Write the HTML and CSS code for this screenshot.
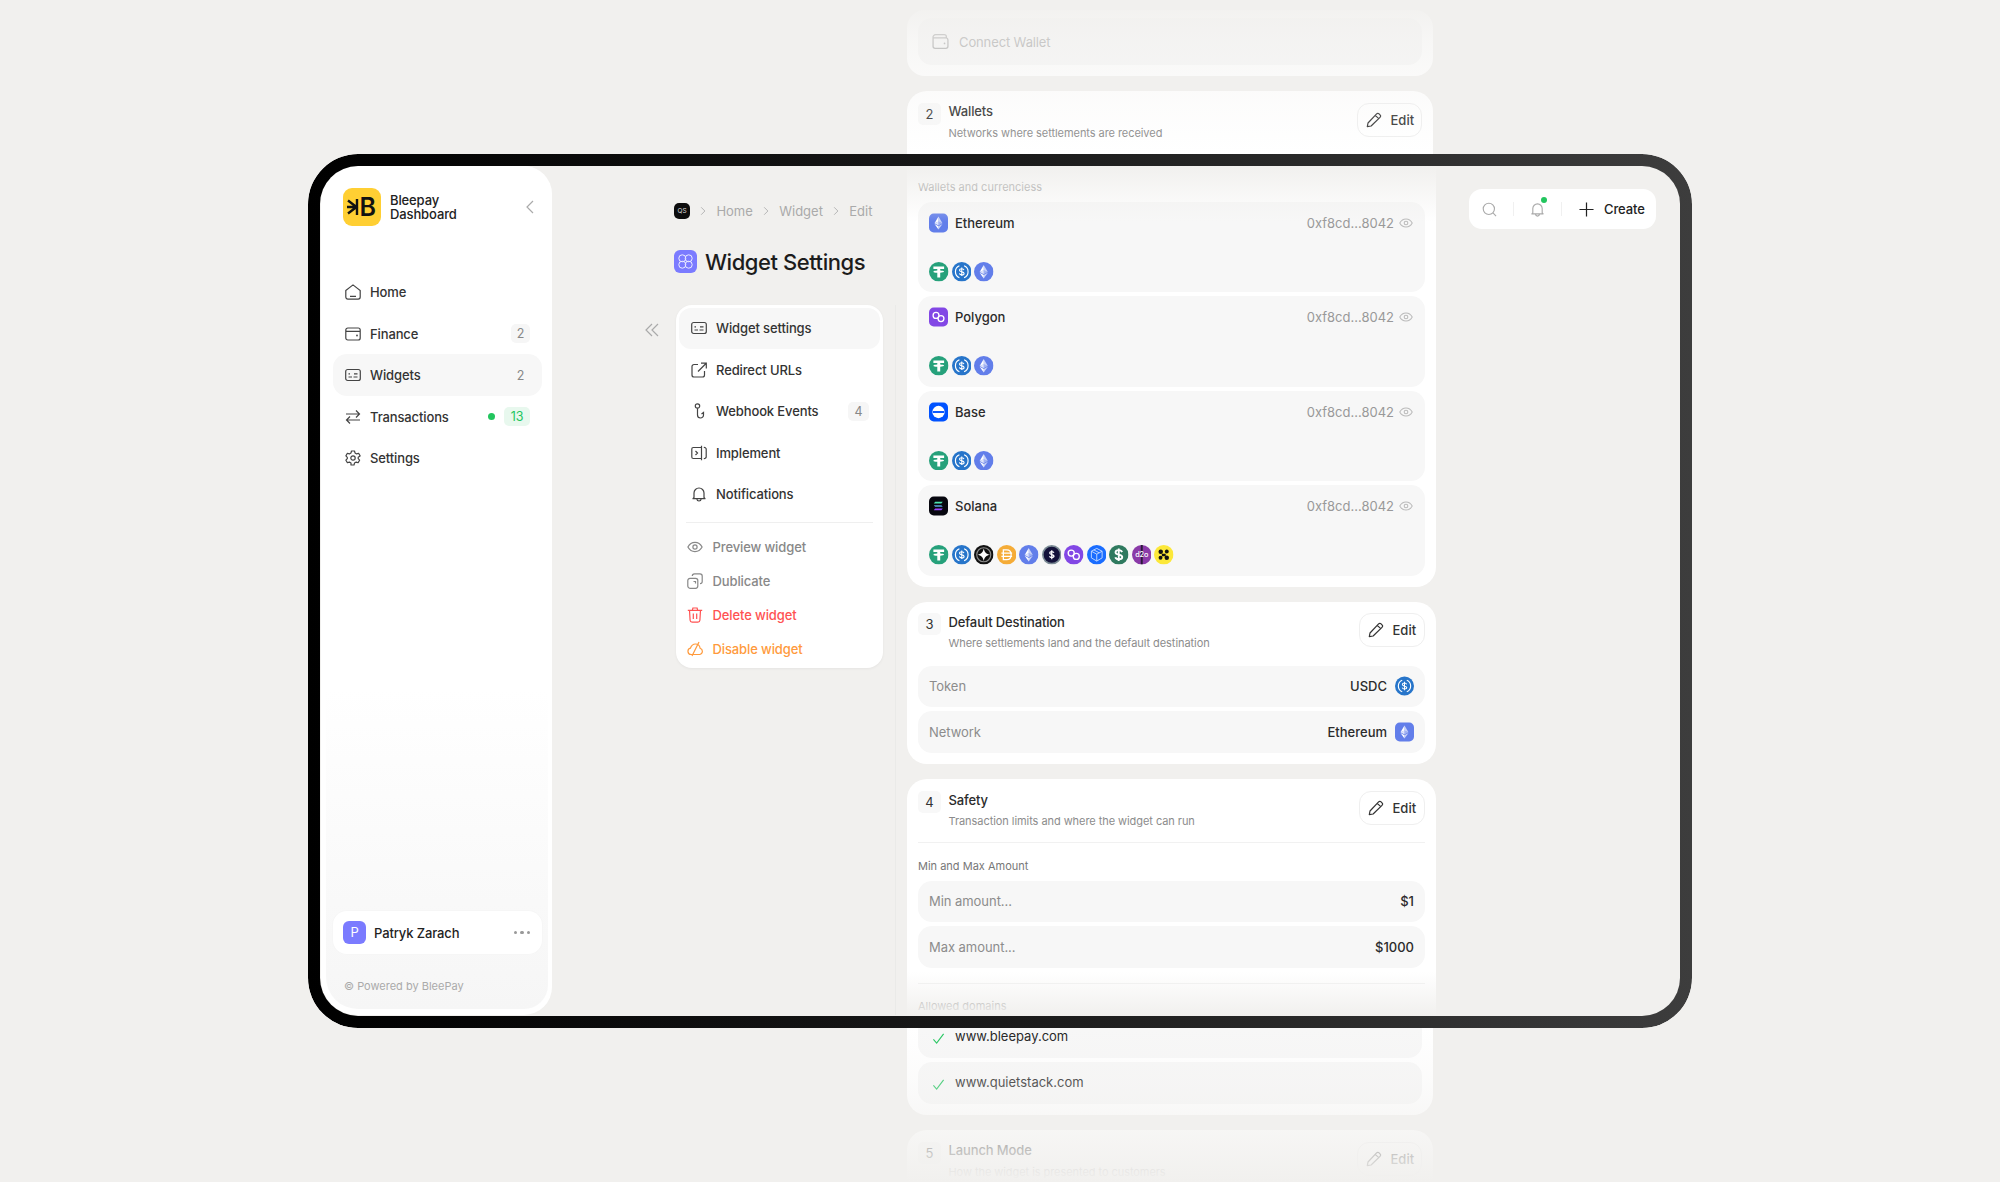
FILE: index.html
```html
<!DOCTYPE html>
<html lang="en">
<head>
    <meta charset="UTF-8">
    <title>Bleepay Dashboard - Widget Settings</title>
    <link rel="stylesheet" href="styles.css">
</head>
<body>

<svg class="sprites" xmlns="http://www.w3.org/2000/svg">
    <symbol id="ic-eth" viewBox="0 0 20 20"><path d="M10 3.200v5.200l4.200 1.900z" fill="#fff" opacity=".65"/><path d="M10 3.200 5.800 10.300 10 8.400z" fill="#fff"/><path d="M10 8.400v4.200l4.200-2.300z" fill="#fff" opacity=".4"/><path d="M10 8.400 5.800 10.300l4.200 2.300z" fill="#fff" opacity=".8"/><path d="M10 13.400v3.400l4.200-5.800z" fill="#fff" opacity=".65"/><path d="M10 13.400 5.800 11l4.200 5.800z" fill="#fff"/></symbol>
    <symbol id="ic-loops" viewBox="0 0 20 20"><circle cx="7.400" cy="8.300" r="3.100" fill="none" stroke="#fff" stroke-width="1.400"/><circle cx="12.600" cy="11.700" r="3.100" fill="none" stroke="#fff" stroke-width="1.400"/></symbol>
    <symbol id="tk-usdt" viewBox="0 0 20 20"><circle cx="10" cy="10" r="10" fill="#26a17b"/><path d="M4.500 4.500h11v2.600h-4v1.500c2.100.1 4 .5 4 1.200s-1.900 1.100-4 1.200V16h-3v-4.900c-2.100-.1-4-.5-4-1.200s1.900-1.100 4-1.200V7.100h-4z" fill="#fff"/></symbol>
    <symbol id="tk-usdc" viewBox="0 0 20 20"><circle cx="10" cy="10" r="10" fill="#2775ca"/><path d="M7.600 3.900a6.600 6.600 0 0 0 0 12.200M12.400 3.900a6.600 6.600 0 0 1 0 12.200" fill="none" stroke="#fff" stroke-width="1.200"/><path d="M12.300 8.300c-.3-1-1.200-1.400-2.300-1.400-1.300 0-2.300.6-2.300 1.600 0 2.300 4.700 1 4.700 3.200 0 1-1 1.500-2.400 1.500-1.200 0-2.100-.5-2.400-1.500M10 5.600v8.800" fill="none" stroke="#fff" stroke-width="1.100"/></symbol>
    <symbol id="tk-eth" viewBox="0 0 20 20"><circle cx="10" cy="10" r="10" fill="#627eea"/><use href="#ic-eth"/></symbol>
    <symbol id="tk-diamond" viewBox="0 0 20 20"><circle cx="10" cy="10" r="10" fill="#111"/><circle cx="10" cy="10" r="7.200" fill="none" stroke="#888" stroke-width="1.200"/><path d="M10 3.500c.8 4 2.500 5.700 6.500 6.500-4 .8-5.700 2.500-6.500 6.500-.8-4-2.500-5.700-6.500-6.500 4-.8 5.700-2.500 6.500-6.500z" fill="#fff"/></symbol>
    <symbol id="tk-dai" viewBox="0 0 20 20"><circle cx="10" cy="10" r="10" fill="#f5ac37"/><path d="M6.500 5H10c3 0 4.500 2.200 4.500 5s-1.500 5-4.500 5H6.500zM4.500 8.400h11M4.500 11.600h11" fill="none" stroke="#fff" stroke-width="1.300"/></symbol>
    <symbol id="tk-usdx" viewBox="0 0 20 20"><circle cx="10" cy="10" r="10" fill="#7a8a94"/><circle cx="10" cy="10" r="8.300" fill="#14123a"/><path d="M12.200 8c-.3-.8-1.100-1.200-2.200-1.200-1.200 0-2.100.6-2.100 1.500 0 2.100 4.400.9 4.400 3.100 0 1-1 1.500-2.300 1.500-1.200 0-2-.5-2.300-1.300M10 5.500v9" fill="none" stroke="#fff" stroke-width="1.300"/></symbol>
    <symbol id="tk-matic" viewBox="0 0 20 20"><circle cx="10" cy="10" r="10" fill="#8247e5"/><use href="#ic-loops"/></symbol>
    <symbol id="tk-cube" viewBox="0 0 20 20"><circle cx="10" cy="10" r="10" fill="#1a6dff"/><path d="M10 3.500 15.500 6.400v6.800L10 16.500l-5.500-3.300V6.400zM4.500 6.400 10 9.400l5.500-3M10 9.400v7M7 5l5.500 3" fill="none" stroke="#cfe0ff" stroke-width=".9"/></symbol>
    <symbol id="tk-green" viewBox="0 0 20 20"><circle cx="10" cy="10" r="10" fill="#2f7a5f"/><path d="M13.400 7.300C13 6 11.800 5.300 10 5.300c-1.900 0-3.300.9-3.300 2.300 0 3.100 6.900 1.400 6.900 4.700 0 1.500-1.500 2.400-3.500 2.400-1.900 0-3.200-.8-3.600-2.200M10 3.500v13" fill="none" stroke="#fff" stroke-width="1.900"/></symbol>
    <symbol id="tk-d2o" viewBox="0 0 20 20"><circle cx="10" cy="10" r="10" fill="#8a3aa8"/><path d="M9 .1h2v19.800H9z" fill="#2b1a3a"/><text x="10" y="12.800" text-anchor="middle" font-family="Inter, sans-serif" font-size="7.500" font-weight="500" fill="#fff">d2o</text></symbol>
    <symbol id="tk-yellow" viewBox="0 0 20 20"><circle cx="10" cy="10" r="10" fill="#fce83a"/><circle cx="6.900" cy="7" r="2.300" fill="#111"/><circle cx="13.100" cy="6.700" r="2" fill="#111"/><circle cx="6.700" cy="13" r="2" fill="#111"/><circle cx="13.100" cy="13.100" r="2.300" fill="#111"/><path d="M8 9h4v2.500H8z" fill="#111"/></symbol>
    <symbol id="ic-widget" viewBox="0 0 16 16"><rect x=".7" y="2.500" width="14.600" height="11" rx="2" fill="none" stroke="currentColor" stroke-width="1.200"/><path d="M3.500 6.800h1.500M3.500 10h3.500M8.500 10h4M9 6.800h3.500" fill="none" stroke="currentColor" stroke-width="1.200"/></symbol>
    <symbol id="ic-eye" viewBox="0 0 16 16"><path d="M.9 8C2.500 5 5 3.400 8 3.400S13.500 5 15.100 8c-1.600 3-4.100 4.600-7.100 4.600S2.500 11 .9 8z" fill="none" stroke="currentColor" stroke-width="1.200"/><circle cx="8" cy="8" r="2.100" fill="none" stroke="currentColor" stroke-width="1.200"/></symbol>
    <symbol id="ic-pencil" viewBox="0 0 16 16"><path d="M1.300 14.700 2 11 10.600 1.900c.7-.7 1.800-.7 2.500 0l.9.900c.7.700.7 1.800 0 2.500L5.100 14zM9.300 3.300l3.400 3.400" fill="none" stroke="currentColor" stroke-width="1.200" stroke-linejoin="round"/></symbol>
    <symbol id="ic-check" viewBox="0 0 14 14"><path d="M1.500 8 5 12 12.500 2" fill="none" stroke="currentColor" stroke-width="1.200"/></symbol>
    <symbol id="ic-wallet" viewBox="0 0 16 16"><path d="M1 4.500V12.500a2 2 0 0 0 2 2h10a2 2 0 0 0 2-2V6.500a2 2 0 0 0-2-2H1zm0 0a2.500 2.500 0 0 1 2.500-3h8a2 2 0 0 1 2 2v1" fill="none" stroke="currentColor" stroke-width="1.200"/><circle cx="11.800" cy="9.800" r=".8" fill="currentColor"/></symbol>
    <symbol id="ic-bell" viewBox="0 0 16 16"><path d="M3 11.500V7a5 5 0 0 1 10 0v4.500l1 1.200H2zM5.800 13c.2 1.300 1.100 2 2.200 2s2-.7 2.200-2" fill="none" stroke="currentColor" stroke-width="1.200" stroke-linejoin="round"/></symbol>
    <symbol id="ic-chev" viewBox="0 0 8 12"><path d="M1.500 1 6.500 6l-5 5" fill="none" stroke="currentColor" stroke-width="1.100"/></symbol>
</svg>

<div class="page">

    <aside class="sidebar">
        <div class="side-panel">
            <div class="brand">
                <svg class="logo" viewBox="0 0 38 38">
                    <rect width="38" height="38" rx="9" fill="#ffcf33"/>
                    <path d="M4 19h9.500M5 12.500 13.500 19 5 25.500M14 11v16" fill="none" stroke="#111" stroke-width="2.400"/>
                    <text x="16.500" y="27.500" class="logo-b">B</text>
                </svg>
                <div class="brand-name">Bleepay<br>Dashboard</div>
                <svg class="brand-back" viewBox="0 0 8 14"><path d="M7 1 1 7l6 6" fill="none" stroke="#aaa" stroke-width="1.200"/></svg>
            </div>

            <nav class="side-nav">
                <a class="nav-row">
                    <svg class="nav-icon" viewBox="0 0 16 16"><path d="M.8 6.500 8 .9l7.200 5.600v6.600a2 2 0 0 1-2 2H2.800a2 2 0 0 1-2-2zM5 12.300h6" fill="none" stroke="currentColor" stroke-width="1.200"/></svg>
                    <span class="nav-label">Home</span>
                </a>
                <a class="nav-row">
                    <svg class="nav-icon" viewBox="0 0 16 16"><path d="M.8 4a2 2 0 0 1 2-2h10.400a2 2 0 0 1 2 2v8a2 2 0 0 1-2 2H2.800a2 2 0 0 1-2-2zM.8 4.200c0 .8.800 1.100 2 1.100h12.400" fill="none" stroke="currentColor" stroke-width="1.200"/><circle cx="12" cy="9.500" r=".9" fill="currentColor"/></svg>
                    <span class="nav-label">Finance</span>
                    <span class="badge">2</span>
                </a>
                <a class="nav-row active">
                    <svg class="nav-icon"><use href="#ic-widget"/></svg>
                    <span class="nav-label">Widgets</span>
                    <span class="badge plain">2</span>
                </a>
                <a class="nav-row">
                    <svg class="nav-icon" viewBox="0 0 16 16"><path d="M1 5h13.500M11 1.500 14.500 5 11 8.500M15 11H1.500M5 7.500 1.500 11 5 14.500" fill="none" stroke="currentColor" stroke-width="1.200"/></svg>
                    <span class="nav-label">Transactions</span>
                    <span class="dot"></span>
                    <span class="badge green">13</span>
                </a>
                <a class="nav-row">
                    <svg class="nav-icon" viewBox="0 0 16 16"><path d="M6.500 1h3l.5 1.900 1.700 1 1.900-.6 1.500 2.600L13.200 7.300v1.400l1.400 1.400-1.500 2.600-1.900-.6-1.700 1-.5 1.900h-3L6 13.100l-1.700-1-1.900.6L.9 10.100l1.400-1.400V7.300L.9 5.900l1.500-2.600 1.900.6 1.700-1z" fill="none" stroke="currentColor" stroke-width="1.200" stroke-linejoin="round"/><circle cx="8" cy="8" r="2.200" fill="none" stroke="currentColor" stroke-width="1.200"/></svg>
                    <span class="nav-label">Settings</span>
                </a>
            </nav>

            <div class="user-card">
                <span class="avatar">P</span>
                <span class="user-name">Patryk Zarach</span>
                <span class="more"><i></i><i></i><i></i></span>
            </div>
            <div class="powered">© Powered by BleePay</div>
        </div>
    </aside>

    <section class="settings-col">
        <div class="crumbs">
            <span class="crumb-logo">QS</span>
            <svg class="crumb-chev"><use href="#ic-chev"/></svg>
            <span>Home</span>
            <svg class="crumb-chev"><use href="#ic-chev"/></svg>
            <span>Widget</span>
            <svg class="crumb-chev"><use href="#ic-chev"/></svg>
            <span>Edit</span>
        </div>
        <div class="page-title">
            <svg class="title-icon" viewBox="0 0 23 23">
                <rect width="23" height="23" rx="6" fill="#7b7bff"/>
                <g fill="none" stroke="#fff" stroke-width="1" opacity=".85"><circle cx="8.300" cy="8.300" r="3.500"/><circle cx="14.700" cy="8.300" r="3.500"/><circle cx="8.300" cy="14.700" r="3.500"/><circle cx="14.700" cy="14.700" r="3.500"/></g>
            </svg>
            <h1>Widget Settings</h1>
        </div>
        <div class="settings-row">
            <svg class="collapse" viewBox="0 0 14 14"><path d="M7 1 1 7l6 6M13 1 7 7l6 6" fill="none" stroke="#aaa" stroke-width="1.200"/></svg>
            <div class="menu-card">
                <a class="menu-row active">
                    <svg class="nav-icon"><use href="#ic-widget"/></svg>
                    <span class="nav-label">Widget settings</span>
                </a>
                <a class="menu-row">
                    <svg class="nav-icon" viewBox="0 0 16 16"><path d="M7 2.500H3a2 2 0 0 0-2 2v8.500a2 2 0 0 0 2 2h8.500a2 2 0 0 0 2-2V9M7 9.500 15 1.500M10 1.200h5.300v5.300" fill="none" stroke="currentColor" stroke-width="1.200"/></svg>
                    <span class="nav-label">Redirect URLs</span>
                </a>
                <a class="menu-row">
                    <svg class="nav-icon" viewBox="0 0 16 16"><circle cx="6.500" cy="3" r="2.200" fill="none" stroke="currentColor" stroke-width="1.200"/><path d="M6.500 5.200V12a3 3 0 0 0 6 0V9.500l-2 1.500" fill="none" stroke="currentColor" stroke-width="1.200"/></svg>
                    <span class="nav-label">Webhook Events</span>
                    <span class="badge wide">4</span>
                </a>
                <a class="menu-row">
                    <svg class="nav-icon" viewBox="0 0 16 16"><path d="M10.500 2.500H2.300a1.500 1.500 0 0 0-1.500 1.500v8a1.500 1.500 0 0 0 1.500 1.500h8.200M10.500 .8v14.400M12.800 2.500a2 2 0 0 1 2.400 1.500v8a2 2 0 0 1-2.400 1.500M4.500 6l2 2-2 2" fill="none" stroke="currentColor" stroke-width="1.200"/></svg>
                    <span class="nav-label">Implement</span>
                </a>
                <a class="menu-row">
                    <svg class="nav-icon"><use href="#ic-bell"/></svg>
                    <span class="nav-label">Notifications</span>
                </a>
                <div class="menu-line"></div>
                <a class="action-row grey">
                    <svg class="nav-icon"><use href="#ic-eye"/></svg>
                    <span>Preview widget</span>
                </a>
                <a class="action-row grey">
                    <svg class="nav-icon" viewBox="0 0 16 16"><rect x=".8" y="5.300" width="10" height="10" rx="2.200" fill="none" stroke="currentColor" stroke-width="1.200"/><path d="M5.300 3A2.200 2.200 0 0 1 7.500.8h5.500a2.200 2.200 0 0 1 2.200 2.200v5.500a2.200 2.200 0 0 1-2.200 2.200M6.500 8.500h2v2" fill="none" stroke="currentColor" stroke-width="1.200"/></svg>
                    <span>Dublicate</span>
                </a>
                <a class="action-row red">
                    <svg class="nav-icon" viewBox="0 0 16 16"><path d="M.8 3.300h14.400M5.300 3.300l.6-2.300h4.200l.6 2.300M2.500 3.300l.6 10a2 2 0 0 0 2 1.900h5.800a2 2 0 0 0 2-1.900l.6-10M6.300 6.500v5.500M9.700 6.500v5.500" fill="none" stroke="currentColor" stroke-width="1.200"/></svg>
                    <span>Delete widget</span>
                </a>
                <a class="action-row orange">
                    <svg class="nav-icon" viewBox="0 0 16 16"><path d="M4 13.500a3.200 3.200 0 0 1-.6-6.300C4.300 4.500 6.200 3 8.500 3c2.600 0 4.300 1.900 4.600 4.300a3.200 3.200 0 0 1-.3 6.200zM12 1 5 15" fill="none" stroke="currentColor" stroke-width="1.200"/></svg>
                    <span>Disable widget</span>
                </a>
            </div>
        </div>
    </section>

    <div class="col-line"></div>

    <main class="cards">
        <div class="card first">
            <div class="connect">
                <svg class="connect-icon"><use href="#ic-wallet"/></svg>
                <span>Connect Wallet</span>
            </div>
        </div>

        <div class="card-top">
            <div class="card-head">
                <span class="step">2</span>
                <div class="head-text">
                    <div class="head-title">Wallets</div>
                    <div class="head-sub">Networks where settlements are received</div>
                </div>
                <button class="edit"><svg><use href="#ic-pencil"/></svg>Edit</button>
            </div>
        </div>
        <div class="card-rest wallets">
            <div class="field-label">Wallets and currenciess</div>
            <div class="rows">
                <div class="wallet">
                    <div class="wallet-top">
                        <svg class="chain" viewBox="0 0 20 20"><rect width="20" height="20" rx="5" fill="#627eea"/><use href="#ic-eth"/></svg>
                        <span class="wallet-name">Ethereum</span>
                        <span class="addr">0xf8cd...8042</span>
                        <svg class="eye"><use href="#ic-eye"/></svg>
                    </div>
                    <div class="tokens">
                        <svg><use href="#tk-usdt"/></svg><svg><use href="#tk-usdc"/></svg><svg><use href="#tk-eth"/></svg>
                    </div>
                </div>
                <div class="wallet">
                    <div class="wallet-top">
                        <svg class="chain" viewBox="0 0 20 20"><rect width="20" height="20" rx="5" fill="#8247e5"/><use href="#ic-loops"/></svg>
                        <span class="wallet-name">Polygon</span>
                        <span class="addr">0xf8cd...8042</span>
                        <svg class="eye"><use href="#ic-eye"/></svg>
                    </div>
                    <div class="tokens">
                        <svg><use href="#tk-usdt"/></svg><svg><use href="#tk-usdc"/></svg><svg><use href="#tk-eth"/></svg>
                    </div>
                </div>
                <div class="wallet">
                    <div class="wallet-top">
                        <svg class="chain" viewBox="0 0 20 20"><rect width="20" height="20" rx="5" fill="#0052ff"/><circle cx="10" cy="10" r="6.500" fill="#fff"/><rect x="4" y="9" width="12" height="2" fill="#0052ff"/></svg>
                        <span class="wallet-name">Base</span>
                        <span class="addr">0xf8cd...8042</span>
                        <svg class="eye"><use href="#ic-eye"/></svg>
                    </div>
                    <div class="tokens">
                        <svg><use href="#tk-usdt"/></svg><svg><use href="#tk-usdc"/></svg><svg><use href="#tk-eth"/></svg>
                    </div>
                </div>
                <div class="wallet">
                    <div class="wallet-top">
                        <svg class="chain" viewBox="0 0 20 20"><rect width="20" height="20" rx="5" fill="#07070f"/><path d="M6.500 5.500h8l-1.500 1.800H5z" fill="#4be3b0"/><path d="M5 9.100h8l1.500 1.800h-8z" fill="#5aa6e0"/><path d="M6.500 12.700h8L13 14.500H5z" fill="#9945ff"/></svg>
                        <span class="wallet-name">Solana</span>
                        <span class="addr">0xf8cd...8042</span>
                        <svg class="eye"><use href="#ic-eye"/></svg>
                    </div>
                    <div class="tokens">
                        <svg><use href="#tk-usdt"/></svg><svg><use href="#tk-usdc"/></svg><svg><use href="#tk-diamond"/></svg><svg><use href="#tk-dai"/></svg><svg><use href="#tk-eth"/></svg><svg><use href="#tk-usdx"/></svg><svg><use href="#tk-matic"/></svg><svg><use href="#tk-cube"/></svg><svg><use href="#tk-green"/></svg><svg><use href="#tk-d2o"/></svg><svg><use href="#tk-yellow"/></svg>
                    </div>
                </div>
            </div>
        </div>

        <div class="card">
            <div class="card-head wide">
                <span class="step">3</span>
                <div class="head-text">
                    <div class="head-title">Default Destination</div>
                    <div class="head-sub">Where settlements land and the default destination</div>
                </div>
                <button class="edit"><svg><use href="#ic-pencil"/></svg>Edit</button>
            </div>
            <div class="rows dest">
                <div class="field">
                    <span class="field-name">Token</span>
                    <span class="field-value">USDC</span>
                    <svg class="field-icon"><use href="#tk-usdc"/></svg>
                </div>
                <div class="field">
                    <span class="field-name">Network</span>
                    <span class="field-value">Ethereum</span>
                    <svg class="field-icon" viewBox="0 0 20 20"><rect width="20" height="20" rx="5" fill="#627eea"/><use href="#ic-eth"/></svg>
                </div>
            </div>
        </div>

        <div class="card-inner safety">
            <div class="card-head wide ruled">
                <span class="step">4</span>
                <div class="head-text">
                    <div class="head-title">Safety</div>
                    <div class="head-sub">Transaction limits and where the widget can run</div>
                </div>
                <button class="edit"><svg><use href="#ic-pencil"/></svg>Edit</button>
            </div>
            <div class="field-label amount">Min and Max Amount</div>
            <div class="rows">
                <div class="field">
                    <span class="field-name">Min amount...</span>
                    <span class="field-value strong">$1</span>
                </div>
                <div class="field">
                    <span class="field-name">Max amount...</span>
                    <span class="field-value strong">$1000</span>
                </div>
            </div>
            <div class="inner-line"></div>
            <div class="field-label">Allowed domains</div>
        </div>
        <div class="card-bottom">
            <div class="rows">
                <div class="domain"><svg><use href="#ic-check"/></svg><span>www.bleepay.com</span></div>
                <div class="domain"><svg><use href="#ic-check"/></svg><span>www.quietstack.com</span></div>
            </div>
        </div>

        <div class="card-top last">
            <div class="card-head">
                <span class="step">5</span>
                <div class="head-text">
                    <div class="head-title">Launch Mode</div>
                    <div class="head-sub">How the widget is presented to customers</div>
                </div>
                <button class="edit"><svg><use href="#ic-pencil"/></svg>Edit</button>
            </div>
        </div>

        <div class="fade fade-top"></div>
        <div class="fade fade-in-top"></div>
        <div class="fade fade-in-bottom"></div>
        <div class="fade fade-bottom"></div>
    </main>

    <div class="toolbar">
        <svg class="tool-icon" viewBox="0 0 16 16"><circle cx="7.300" cy="7.300" r="6" fill="none" stroke="#aaa" stroke-width="1.200"/><path d="M11.700 11.700 15 15" fill="none" stroke="#aaa" stroke-width="1.200"/></svg>
        <span class="tool-line"></span>
        <span class="tool-bell">
            <svg class="tool-icon"><use href="#ic-bell"/></svg>
            <span class="bell-dot"></span>
        </span>
        <span class="tool-line"></span>
        <svg class="tool-plus" viewBox="0 0 16 16"><path d="M8 .5v15M.5 8h15" fill="none" stroke="#222" stroke-width="1.300"/></svg>
        <span class="tool-create">Create</span>
    </div>
</div>

<div class="frame"></div>

</body>
</html>
```

FILE: styles.css
```css
* {
    box-sizing: border-box;
}
html, body {
    margin: 0;
    padding: 0;
}
body {
    width: 2000px;
    height: 1182px;
    overflow: hidden;
    position: relative;
    background-color: #f1f0ee;
    font-family: Inter, "Liberation Sans", sans-serif;
    font-size: 13px;
    font-weight: 500;
    letter-spacing: -0.12px;
    color: #2b2b2b;
}
.sprites {
    display: none;
}
.page {
    display: flex;
    align-items: flex-start;
    width: 2000px;
    height: 1182px;
    padding-left: 321px;
}

/* device frame drawn over everything */
.frame {
    position: absolute;
    left: 308px;
    top: 154px;
    width: 1384px;
    height: 874px;
    border: 12.5px solid transparent;
    border-radius: 50px;
    background: linear-gradient(90deg, #000 0%, #1a1a1a 50%, #3d3d3d 100%) border-box;
    -webkit-mask: linear-gradient(#000 0 0) padding-box, linear-gradient(#000 0 0);
    -webkit-mask-composite: xor;
    mask-composite: exclude;
    pointer-events: none;
}

/* sidebar */
.sidebar {
    flex: none;
    width: 231px;
    height: 849px;
    margin-top: 166px;
    padding: 0 4px 6px 5px;
    background-color: #fff;
    border-radius: 36px 28px 28px 36px;
}
.side-panel {
    height: 100%;
    display: flex;
    flex-direction: column;
    padding: 22px 6px 0 7px;
    border-radius: 32px 24px 24px 32px;
    background: linear-gradient(180deg, #fff 0%, #fff 62%, #f6f6f6 100%);
}
.brand {
    display: flex;
    align-items: center;
    height: 38px;
    margin-left: 10px;
}
.logo {
    flex: none;
    width: 38px;
    height: 38px;
}
.logo-b {
    font-family: Inter, sans-serif;
    font-size: 25px;
    font-weight: 600;
    fill: #111;
}
.brand-name {
    margin-left: 9px;
    font-size: 13px;
    line-height: 14px;
    color: #222;
}
.brand-back {
    width: 8px;
    height: 14px;
    margin-left: auto;
    margin-right: 8px;
}
.side-nav {
    margin-top: 45.300px;
}
.nav-row {
    display: flex;
    align-items: center;
    height: 41.500px;
    padding: 0 12px;
    border-radius: 14px;
    color: #333;
}
.nav-row.active, .menu-row.active {
    background-color: #f7f7f7;
}
.nav-icon {
    flex: none;
    width: 16px;
    height: 16px;
    color: #444;
}
.nav-label {
    margin-left: 9px;
}
.badge {
    margin-left: auto;
    width: 19px;
    height: 19px;
    line-height: 19px;
    text-align: center;
    border-radius: 5px;
    background-color: #f6f6f6;
    color: #888;
    font-size: 12.500px;
    font-weight: 400;
}
.badge.plain {
    background: none;
}
.badge.green {
    width: 26px;
    margin-left: 9px;
    background-color: #e8f8ee;
    color: #22c55e;
}
.badge.wide {
    width: 21px;
}
.dot {
    margin-left: auto;
    width: 7.500px;
    height: 7.500px;
    border-radius: 50%;
    background-color: #22c55e;
}
.user-card {
    display: flex;
    align-items: center;
    height: 43px;
    margin-top: auto;
    padding: 0 12px 0 10px;
    border-radius: 14px;
    background-color: #fff;
    box-shadow: 0 0 0 1px #f6f6f6;
}
.avatar {
    width: 23px;
    height: 23px;
    line-height: 23px;
    border-radius: 6px;
    background-color: #7b7bff;
    color: #fff;
    text-align: center;
    font-weight: 400;
}
.user-name {
    margin-left: 8px;
    font-size: 13px;
    color: #222;
}
.more {
    display: flex;
    gap: 3px;
    margin-left: auto;
}
.more i {
    width: 3.500px;
    height: 3.500px;
    border-radius: 50%;
    background-color: #999;
}
.powered {
    margin: 25px 0 16px 11px;
    font-size: 11px;
    line-height: 14px;
    font-weight: 400;
    letter-spacing: 0;
    color: #aaa;
}

/* middle column */
.settings-col {
    flex: none;
    width: 343px;
    padding-top: 203px;
}
.crumbs {
    display: flex;
    align-items: center;
    height: 16px;
    margin-left: 122px;
    font-size: 13px;
    font-weight: 400;
    letter-spacing: 0;
    color: #aaa;
}
.crumb-logo {
    width: 16px;
    height: 16px;
    line-height: 16px;
    text-align: center;
    border-radius: 5px;
    background-color: #0d0d0d;
    color: #ddd;
    font-size: 6.500px;
}
.crumb-chev {
    width: 6px;
    height: 10px;
    margin: 0 10.200px;
    color: #aaa;
}
.page-title {
    display: flex;
    align-items: center;
    margin: 31px 0 0 122px;
    height: 23px;
}
.title-icon {
    width: 23px;
    height: 23px;
}
.page-title h1 {
    margin: 0 0 0 8px;
    font-size: 22px;
    font-weight: 500;
    letter-spacing: -0.45px;
    color: #1c1c1c;
}
.settings-row {
    display: flex;
    align-items: flex-start;
    margin-top: 32px;
}
.collapse {
    width: 14px;
    height: 14px;
    margin: 18px 17px 0 93px;
}
.menu-card {
    width: 207px;
    height: 363px;
    padding: 2.500px 3px 3px;
    border-radius: 16px;
    background-color: #fff;
    box-shadow: 0 1px 3px rgba(0, 0, 0, 0.05);
}
.menu-row {
    display: flex;
    align-items: center;
    height: 41.500px;
    padding: 0 11px 0 12px;
    border-radius: 12px;
    color: #333;
}
.menu-line {
    height: 1px;
    margin: 6.500px 7px 7px;
    background-color: #efefef;
}
.action-row {
    display: flex;
    align-items: center;
    height: 34px;
    padding-left: 8px;
}
.action-row span {
    margin-left: 9.500px;
}
.action-row .nav-icon {
    color: inherit;
}
.grey {
    color: #888;
}
.red {
    color: #ff5252;
}
.orange {
    color: #ff9a3c;
}
.col-line {
    flex: none;
    width: 1px;
    height: 710px;
    margin-top: 305px;
    background-color: #eaeae8;
}

/* settings cards */
.cards {
    flex: none;
    position: relative;
    width: 529px;
    height: 1182px;
    margin-left: 11px;
    padding-top: 10px;
}
.card, .card-rest {
    background-color: #fff;
    border-radius: 20px;
    padding: 11px;
}
.card {
    margin-bottom: 15px;
}
.card.first {
    width: 526px;
    height: 66px;
    padding: 8px 11px;
    border-radius: 18px;
}
.connect {
    display: flex;
    align-items: center;
    height: 47px;
    padding: 0 11px 0 14px;
    border-radius: 14px;
    background-color: #f7f7f7;
    color: #999;
    font-size: 13px;
    font-weight: 400;
}
.connect-icon {
    width: 17px;
    height: 17px;
    margin-right: 10px;
}
.card-top {
    width: 526px;
    height: 75px;
    padding: 12px 11px 0;
    background-color: #fff;
    border-radius: 20px 20px 0 0;
}
.card-rest.wallets {
    height: 420.700px;
    padding: 13px 11px 0;
    border-radius: 0 0 20px 20px;
    margin-bottom: 15px;
}
.card-head {
    display: flex;
    align-items: flex-start;
    height: 34px;
}
.step {
    flex: none;
    width: 23px;
    height: 22px;
    line-height: 22px;
    text-align: center;
    border-radius: 5px;
    background-color: #f8f8f8;
    font-size: 13px;
    font-weight: 400;
    color: #333;
}
.head-text {
    margin: 1px 0 0 7.500px;
}
.card-top .head-text {
    margin-top: 0;
}
.card-top .head-sub {
    margin-top: 7px;
}
.head-title {
    font-size: 13px;
    line-height: 16px;
    color: #2b2b2b;
}
.head-sub {
    margin-top: 6px;
    font-size: 11px;
    line-height: 14px;
    font-weight: 400;
    letter-spacing: -0.06px;
    color: #8c8c8c;
}
.edit {
    display: flex;
    align-items: center;
    height: 34px;
    width: 65px;
    margin-left: auto;
    padding: 0 0 0 8px;
    border: 1px solid #efefef;
    border-radius: 12px;
    background-color: #fff;
    font-family: inherit;
    font-size: 13px;
    font-weight: 500;
    color: #333;
}
.edit svg {
    width: 16px;
    height: 16px;
    margin-right: 8.500px;
}
.field-label {
    font-size: 11px;
    line-height: 16px;
    font-weight: 400;
    letter-spacing: 0;
    color: #777;
}
.rows {
    display: flex;
    flex-direction: column;
    gap: 4px;
}
.wallets .rows {
    margin-top: 7px;
}
.wallet {
    height: 90.400px;
    padding: 11px 12.500px 0 11px;
    border-radius: 14px;
    background-color: #f7f7f7;
}
.wallet-top {
    display: flex;
    align-items: center;
    height: 20px;
}
.chain {
    flex: none;
    width: 19px;
    height: 20px;
}
.wallet-name {
    margin-left: 7px;
    font-size: 13px;
    letter-spacing: 0;
    color: #2b2b2b;
}
.addr {
    margin-left: auto;
    font-size: 13px;
    font-weight: 400;
    letter-spacing: 0;
    color: #999;
}
.eye {
    width: 14px;
    height: 14px;
    margin-left: 4.500px;
    color: #bbb;
}
.tokens {
    display: flex;
    gap: 3px;
    margin-top: 29px;
}
.tokens svg {
    width: 19.500px;
    height: 19.500px;
}
.card-head.wide .edit {
    width: 66px;
}
.dest {
    margin-top: 19px;
}
.field {
    display: flex;
    align-items: center;
    height: 41.500px;
    padding: 0 11px;
    border-radius: 14px;
    background-color: #f7f7f7;
}
.field-name {
    font-size: 13px;
    font-weight: 400;
    letter-spacing: -0.05px;
    color: #8c8c8c;
}
.field-value {
    margin-left: auto;
    font-size: 13px;
    letter-spacing: 0;
    color: #2b2b2b;
}
.field-icon {
    width: 19px;
    height: 20px;
    margin-left: 8px;
}
.card-inner {
    height: 237px;
    padding: 12px 11px 0;
    background-color: #fff;
    border-radius: 20px 20px 0 0;
}
.card-head.ruled {
    height: 52px;
    border-bottom: 1px solid #f1f1f1;
}
.field-label.amount {
    margin-top: 15px;
    margin-bottom: 7px;
}
.inner-line {
    height: 1px;
    margin: 15px 0 14px;
    background-color: #f1f1f1;
}
.card-bottom {
    width: 526px;
    height: 99px;
    padding: 0 11px;
    background-color: #fff;
    border-radius: 0 0 20px 20px;
    margin-bottom: 15px;
}
.domain {
    display: flex;
    align-items: center;
    height: 42px;
    padding: 0 14px 2px;
    border-radius: 14px;
    background-color: #f7f7f7;
    font-size: 13px;
    font-weight: 400;
    letter-spacing: 0;
    color: #222;
}
.domain svg {
    width: 13px;
    height: 13px;
    margin: 5px 10px 0 0;
    color: #22c55e;
}

/* content fades out toward the frame edges */
.fade {
    position: absolute;
    left: -6px;
    right: -6px;
    pointer-events: none;
}
.fade-top {
    top: 0;
    height: 154px;
    background: linear-gradient(180deg, #f1f0ee 0%, rgba(241, 240, 238, 0.55) 27%, rgba(241, 240, 238, 0.18) 68%, rgba(241, 240, 238, 0) 100%);
}
.fade-in-top {
    top: 166px;
    height: 56px;
    background: linear-gradient(180deg, #f1f0ee 0%, rgba(241, 240, 238, 0) 100%);
}
.fade-in-bottom {
    top: 972px;
    height: 44px;
    background: linear-gradient(180deg, rgba(241, 240, 238, 0) 0%, #f1f0ee 100%);
}
.fade-bottom {
    top: 1028px;
    height: 154px;
    background: linear-gradient(180deg, rgba(241, 240, 238, 0) 0%, rgba(241, 240, 238, 0.25) 35%, rgba(241, 240, 238, 0.7) 75%, #f1f0ee 100%);
}

/* top right toolbar */
.toolbar {
    flex: none;
    display: flex;
    align-items: center;
    width: 187px;
    height: 40px;
    margin: 189px 0 0 33px;
    padding: 0 11px 0 13px;
    border-radius: 13px;
    background-color: #fff;
}
.tool-icon {
    flex: none;
    width: 15px;
    height: 15px;
    color: #aaa;
}
.tool-line {
    width: 1px;
    height: 14px;
    margin: 0 16px;
    background-color: #f0f0f0;
}
.tool-bell {
    position: relative;
    display: flex;
}
.bell-dot {
    position: absolute;
    top: -5px;
    right: -2px;
    width: 6px;
    height: 6px;
    border-radius: 50%;
    background-color: #22c55e;
}
.tool-plus {
    width: 15px;
    height: 15px;
    margin: 0 10px 0 1px;
}
.tool-create {
    color: #222;
}
```
